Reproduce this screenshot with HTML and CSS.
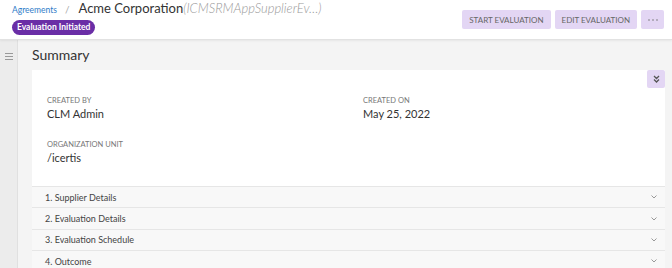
FILE: index.html
```html
<!DOCTYPE html>
<html lang="en">
<head>
    <meta charset="UTF-8">
    <title>Acme Corporation - Evaluation</title>
    <link rel="stylesheet" href="styles.css">
</head>
<body>
    <header class="topbar">
        <div class="title-block">
            <div class="crumbs">
                <a class="crumb-link" href="#">Agreements</a>
                <span class="crumb-sep">/</span>
                <span class="doc-name">Acme Corporation</span><span class="doc-code">(ICMSRMAppSupplierEv…)</span>
            </div>
            <span class="status-badge">Evaluation Initiated</span>
        </div>
        <div class="actions">
            <button class="action-btn">START EVALUATION</button>
            <button class="action-btn">EDIT EVALUATION</button>
            <button class="action-btn more-btn">
                <svg width="10" height="2" viewBox="0 0 10 2"><circle cx="1" cy="1" r="0.8" fill="#777"/><circle cx="5" cy="1" r="0.8" fill="#777"/><circle cx="9" cy="1" r="0.8" fill="#777"/></svg>
            </button>
        </div>
    </header>

    <div class="main">
        <aside class="sidebar">
            <svg class="menu-icon" width="8" height="7" viewBox="0 0 8 7"><path d="M0 0.5H8M0 3.5H8M0 6.5H8" stroke="#999" stroke-width="1"/></svg>
        </aside>

        <section class="content">
            <h2 class="section-title">Summary</h2>

            <div class="card">
                <div class="card-tools">
                    <button class="collapse-btn">
                        <svg width="7" height="8" viewBox="0 0 7 8"><path d="M1 1L3.5 3.5L6 1M1 4.5L3.5 7L6 4.5" fill="none" stroke="#555" stroke-width="1.3"/></svg>
                    </button>
                </div>
                <div class="fields">
                    <div class="field">
                        <div class="field-label">CREATED BY</div>
                        <div class="field-value">CLM Admin</div>
                    </div>
                    <div class="field">
                        <div class="field-label">CREATED ON</div>
                        <div class="field-value">May 25, 2022</div>
                    </div>
                    <div class="field">
                        <div class="field-label">ORGANIZATION UNIT</div>
                        <div class="field-value">/icertis</div>
                    </div>
                </div>

                <div class="accordion">
                    <div class="acc-row"><span>1. Supplier Details</span><svg class="acc-chev" width="6" height="4" viewBox="0 0 6 4"><path d="M0.5 0.5L3 3L5.5 0.5" fill="none" stroke="#999" stroke-width="1"/></svg></div>
                    <div class="acc-row"><span>2. Evaluation Details</span><svg class="acc-chev" width="6" height="4" viewBox="0 0 6 4"><path d="M0.5 0.5L3 3L5.5 0.5" fill="none" stroke="#999" stroke-width="1"/></svg></div>
                    <div class="acc-row"><span>3. Evaluation Schedule</span><svg class="acc-chev" width="6" height="4" viewBox="0 0 6 4"><path d="M0.5 0.5L3 3L5.5 0.5" fill="none" stroke="#999" stroke-width="1"/></svg></div>
                    <div class="acc-row"><span>4. Outcome</span><svg class="acc-chev" width="6" height="4" viewBox="0 0 6 4"><path d="M0.5 0.5L3 3L5.5 0.5" fill="none" stroke="#999" stroke-width="1"/></svg></div>
                </div>
            </div>
        </section>
    </div>
</body>
</html>
```

FILE: styles.css
```css
body {
    margin: 0;
    font-family: Lato, "Noto Sans", sans-serif;
    color: #333;
    background-color: #f4f4f4;
    height: 268px;
    overflow: hidden;
}

.topbar {
    display: flex;
    justify-content: space-between;
    height: 39px;
    padding: 0 8px 0 12px;
    background-color: #fff;
    border-bottom: 1px solid #e2e2e2;
    box-shadow: 0 1px 2px rgba(0, 0, 0, 0.06);
    position: relative;
}

.title-block {
    display: flex;
    flex-direction: column;
    align-items: flex-start;
}

.crumbs {
    display: flex;
    align-items: baseline;
    height: 19px;
}

.crumb-link {
    color: #2f7cc9;
    font-size: 8.5px;
    text-decoration: none;
}

.crumb-sep {
    color: #aaa;
    font-size: 10px;
    margin: 0 9px 0 8px;
}

.doc-name {
    font-size: 13px;
    color: #333;
}

.doc-code {
    font-size: 13px;
    font-style: italic;
    color: #999;
    font-weight: 300;
}

.status-badge {
    margin-top: 1px;
    background-color: #6a2ea6;
    color: #fff;
    font-size: 8.5px;
    font-weight: bold;
    padding: 0 5px;
    height: 15px;
    line-height: 15px;
    border-radius: 8px;
}

.actions {
    display: flex;
    gap: 4px;
    padding-top: 10px;
}

.action-btn {
    height: 19px;
    padding: 0 7px;
    font-family: inherit;
    font-size: 8px;
    color: #666;
    background-color: #e3d6f4;
    border: none;
    border-radius: 2px;
}

.more-btn {
    width: 23px;
    padding: 0;
    display: flex;
    align-items: center;
    justify-content: center;
}

.main {
    display: flex;
    height: 228px;
}

.sidebar {
    width: 18px;
    background-color: #ececec;
    border-right: 1px solid #e0e0e0;
    box-sizing: border-box;
}

.menu-icon {
    display: block;
    margin: 13px 0 0 5px;
}

.content {
    flex: 1;
    padding: 0 7px 0 14px;
}

.section-title {
    margin: 0;
    height: 30px;
    line-height: 29px;
    font-size: 14px;
    font-weight: normal;
    color: #333;
}

.card {
    background-color: #fff;
}

.card-tools {
    display: flex;
    justify-content: flex-end;
}

.collapse-btn {
    width: 18px;
    height: 18px;
    padding: 0;
    background-color: #e3d6f4;
    border: none;
    border-radius: 2px;
    display: flex;
    align-items: center;
    justify-content: center;
}

.fields {
    display: grid;
    grid-template-columns: 316px 1fr;
    row-gap: 20px;
    padding: 8px 15px 22px;
}

.field-label {
    font-size: 7.5px;
    line-height: 9px;
    color: #777;
    margin-bottom: 2px;
}

.field-value {
    font-size: 11px;
    line-height: 13px;
    color: #333;
}

.acc-row {
    display: flex;
    justify-content: space-between;
    align-items: center;
    height: 20.4px;
    padding: 0 8px 0 13px;
    background-color: #f8f8f8;
    border-top: 1px solid #e6e6e6;
    font-size: 9px;
    color: #444;
}

.acc-chev {
    display: block;
}
```
